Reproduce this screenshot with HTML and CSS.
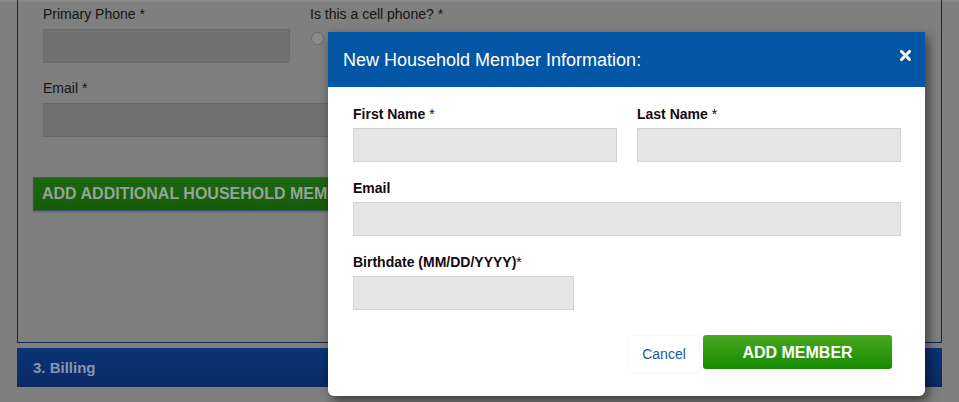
FILE: index.html
```html
<!DOCTYPE html>
<html lang="en">
<head>
<meta charset="utf-8">
<title>New Household Member</title>
<link rel="stylesheet" href="styles.css">
</head>
<body>
<div class="page">
  <section class="panel">
    <div class="fields">
      <div class="field">
        <label class="bg-label">Primary Phone *</label>
        <div class="bg-input"></div>
      </div>
      <div class="field">
        <label class="bg-label">Is this a cell phone? *</label>
        <div class="radio-row"><span class="radio"></span></div>
      </div>
      <div class="field wide">
        <label class="bg-label">Email *</label>
        <div class="bg-input"></div>
      </div>
    </div>
    <button class="bg-add">ADD ADDITIONAL HOUSEHOLD MEMBER</button>
  </section>
  <div class="billing">3. Billing</div>
</div>

<div class="modal">
  <div class="modal-header">
    <h2 class="modal-title">New Household Member Information:</h2>
    <svg class="close" width="11" height="11" viewBox="0 0 11 11" aria-label="Close">
      <path d="M1.5 1.5 L9.5 9.5 M9.5 1.5 L1.5 9.5" stroke="#fff" stroke-width="3" stroke-linecap="square"/>
    </svg>
  </div>
  <div class="modal-body">
    <div class="grid">
      <div class="row">
        <div class="m-label">First Name <span class="star">*</span></div>
        <div class="m-input"></div>
      </div>
      <div class="row">
        <div class="m-label">Last Name <span class="star">*</span></div>
        <div class="m-input"></div>
      </div>
      <div class="row full">
        <div class="m-label">Email</div>
        <div class="m-input"></div>
      </div>
      <div class="row full">
        <div class="m-label">Birthdate (MM/DD/YYYY)<span class="star">*</span></div>
        <div class="m-input short"></div>
      </div>
    </div>
    <div class="footer">
      <button class="cancel">Cancel</button>
      <button class="add">ADD MEMBER</button>
    </div>
  </div>
</div>
</body>
</html>
```

FILE: styles.css
```css
* { box-sizing: border-box; }

html, body {
  margin: 0;
  padding: 0;
  height: 100%;
}

body {
  background: #7f7f7f;
  font-family: "Liberation Sans", Arial, sans-serif;
  overflow: hidden;
  box-shadow: inset 0 2px 0 #888888;
}

.page {
  padding-left: 17px;
  width: 942px;
}

.panel {
  height: 343px;
  border: 1px solid #0e2b4a;
  border-top: none;
  padding: 4px 25px 0 25px;
}

.fields {
  display: grid;
  grid-template-columns: 247px 1fr;
  column-gap: 20px;
  row-gap: 15px;
}

.field.wide { grid-column: 1 / -1; }

.bg-label {
  display: block;
  font-size: 14px;
  line-height: 20px;
  color: #141414;
  margin-bottom: 5px;
}

.bg-input {
  height: 34px;
  background: #717171;
  border: 1px solid #6a6a6a;
}

.radio-row {
  padding-top: 3px;
  padding-left: 1px;
}

.radio {
  display: block;
  width: 13px;
  height: 13px;
  border-radius: 50%;
  background: #8c8c8c;
  border: 1px solid #6a6a6a;
}

.bg-add {
  display: block;
  margin: 40px 0 0 -10px;
  width: 295px;
  height: 34px;
  padding: 0 0 0 8px;
  overflow: hidden;
  text-align: left;
  white-space: nowrap;
  font-family: inherit;
  font-size: 16px;
  font-weight: bold;
  color: #98a298;
  background: linear-gradient(#1b680f, #165c0b);
  border: 1px solid #355a66;
  border-right: none;
  box-shadow: 0 1px 2px rgba(0,0,0,0.25);
}

.billing {
  margin-top: 5px;
  height: 39px;
  padding-left: 16px;
  line-height: 39px;
  font-size: 15px;
  font-weight: bold;
  color: #8797b0;
  background: linear-gradient(#0c3478, #0a2a64);
}

/* Modal */
.modal {
  position: absolute;
  left: 328px;
  top: 32px;
  width: 597px;
  background: #fff;
  border-radius: 0 0 6px 6px;
  box-shadow: 3px 5px 12px rgba(0,0,0,0.55);
}

.modal-header {
  height: 55px;
  background: #0356a4;
  display: flex;
  align-items: center;
  justify-content: space-between;
  padding: 0 14px 0 15px;
}

.modal-title {
  margin: 0;
  font-size: 18px;
  font-weight: normal;
  color: #fff;
  line-height: 20px;
}

.close {
  display: block;
  margin-top: -9px;
}

.modal-body {
  padding: 17px 24px 24px 25px;
}

.grid {
  display: grid;
  grid-template-columns: 264px 264px;
  column-gap: 20px;
}

.row { margin-bottom: 16px; }
.row.full { grid-column: 1 / -1; }

.m-label {
  font-size: 14px;
  font-weight: bold;
  line-height: 20px;
  height: 20px;
  color: #140a12;
  margin-bottom: 4px;
}

.star { font-weight: normal; }

.m-input {
  height: 34px;
  background: #e5e5e5;
  border: 1px solid #d3d3d3;
}

.m-input.short { width: 221px; }

.footer {
  display: flex;
  justify-content: flex-end;
  align-items: flex-start;
  gap: 4px;
  padding: 9px 9px 0 0;
}

.cancel {
  margin-top: 1px;
  width: 70px;
  height: 36px;
  background: #fff;
  border: none;
  box-shadow: 0 0 3px rgba(0,0,0,0.08);
  font-family: inherit;
  font-size: 14px;
  color: #24569a;
  padding: 0;
}

.add {
  width: 189px;
  height: 34px;
  border: none;
  border-radius: 3px;
  background: linear-gradient(#4aa81f, #168b02);
  color: #fff;
  font-family: inherit;
  font-size: 16px;
  font-weight: bold;
  padding: 1px 0 0 0;
}
```
